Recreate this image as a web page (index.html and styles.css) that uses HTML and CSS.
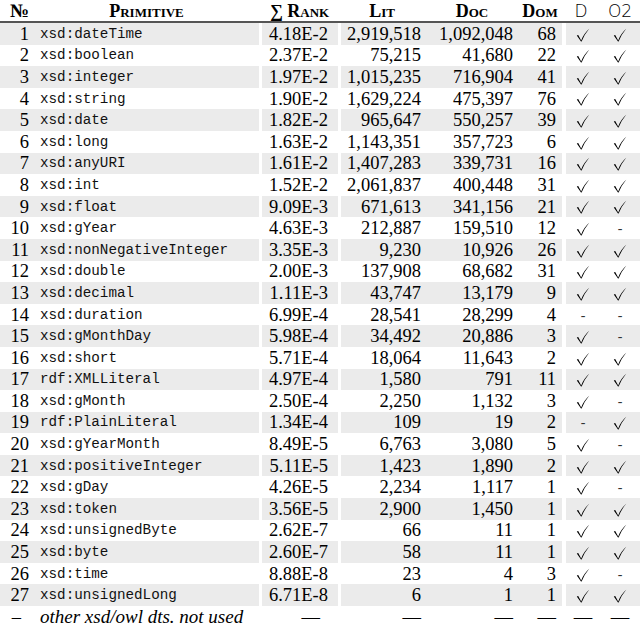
FILE: index.html
```
<!DOCTYPE html>
<html>
<head>
<meta charset="utf-8">
<link rel="stylesheet" href="styles.css">
</head>
<body>
<svg width="0" height="0" class="defs"><defs><symbol id="ck" viewBox="0 0 14 14"><path d="M0.8 7.6 L2.2 7 L5.2 12.4 Q7.5 6 13.2 0.8 Q8.6 6.2 5.6 13.4 L5 13.4 Z" fill="#000"/></symbol></defs></svg>
<table class="tbl">
<colgroup><col class="c1"><col class="c2"><col class="c3"><col class="c4"><col class="c5"><col class="c6"><col class="c7"><col class="c8"></colgroup>
<thead>
<tr>
<th class="num">№</th><th class="prim">Primitive</th><th class="rank">∑ Rank</th><th>Lit</th><th>Doc</th><th>Dom</th><th class="sym">D</th><th class="sym">O2</th>
</tr>
</thead>
<tbody id="body"></tbody>
<tfoot>
<tr class="foot">
<td class="num fnum">–</td><td class="prim"><i>other xsd/owl dts. not used</i></td><td class="rank sep"><span class="fdash">—</span></td><td class="lit sep">—</td><td class="doc">—</td><td class="dom">—</td><td class="mk sep">—</td><td class="mk">—</td>
</tr>
</tfoot>
</table>
<script src="app.js"></script>
</body>
</html>
```
FILE: app.js
```
var rows = [
["xsd:dateTime","4.18E-2","2,919,518","1,092,048","68",1,1],
["xsd:boolean","2.37E-2","75,215","41,680","22",1,1],
["xsd:integer","1.97E-2","1,015,235","716,904","41",1,1],
["xsd:string","1.90E-2","1,629,224","475,397","76",1,1],
["xsd:date","1.82E-2","965,647","550,257","39",1,1],
["xsd:long","1.63E-2","1,143,351","357,723","6",1,1],
["xsd:anyURI","1.61E-2","1,407,283","339,731","16",1,1],
["xsd:int","1.52E-2","2,061,837","400,448","31",1,1],
["xsd:float","9.09E-3","671,613","341,156","21",1,1],
["xsd:gYear","4.63E-3","212,887","159,510","12",1,0],
["xsd:nonNegativeInteger","3.35E-3","9,230","10,926","26",1,1],
["xsd:double","2.00E-3","137,908","68,682","31",1,1],
["xsd:decimal","1.11E-3","43,747","13,179","9",1,1],
["xsd:duration","6.99E-4","28,541","28,299","4",0,0],
["xsd:gMonthDay","5.98E-4","34,492","20,886","3",1,0],
["xsd:short","5.71E-4","18,064","11,643","2",1,1],
["rdf:XMLLiteral","4.97E-4","1,580","791","11",1,1],
["xsd:gMonth","2.50E-4","2,250","1,132","3",1,0],
["rdf:PlainLiteral","1.34E-4","109","19","2",0,1],
["xsd:gYearMonth","8.49E-5","6,763","3,080","5",1,0],
["xsd:positiveInteger","5.11E-5","1,423","1,890","2",1,1],
["xsd:gDay","4.26E-5","2,234","1,117","1",1,0],
["xsd:token","3.56E-5","2,900","1,450","1",1,1],
["xsd:unsignedByte","2.62E-7","66","11","1",1,1],
["xsd:byte","2.60E-7","58","11","1",1,1],
["xsd:time","8.88E-8","23","4","3",1,0],
["xsd:unsignedLong","6.71E-8","6","1","1",1,1]
];
function mark(v){
  return v ? '<svg class="ck" viewBox="0 0 14 14"><use href="#ck"/></svg>' : '<span class="no">-</span>';
}
var h = "";
rows.forEach(function(r, i){
  h += '<tr class="' + (i % 2 === 0 ? "odd" : "even") + '">' +
    '<td class="num">' + (i + 1) + '</td>' +
    '<td class="prim mono">' + r[0] + '</td>' +
    '<td class="rank sep">' + r[1] + '</td>' +
    '<td class="lit sep">' + r[2] + '</td>' +
    '<td class="doc">' + r[3] + '</td>' +
    '<td class="dom">' + r[4] + '</td>' +
    '<td class="mk sep">' + mark(r[5]) + '</td>' +
    '<td class="mk">' + mark(r[6]) + '</td></tr>';
});
document.getElementById("body").innerHTML = h;
```
FILE: styles.css
```
html, body {
  margin: 0;
  padding: 0;
  background: #fff;
}
body {
  width: 640px;
  height: 628px;
  overflow: hidden;
  font-family: "Liberation Serif", "DejaVu Serif", serif;
  color: #000;
}
.defs {
  position: absolute;
}
.tbl {
  width: 640px;
  table-layout: fixed;
  border-collapse: separate;
  border-spacing: 0;
  font-size: 18.5px;
}
.c1 { width: 34px; }
.c2 { width: 225px; }
.c3 { width: 79px; }
.c4 { width: 88px; }
.c5 { width: 92px; }
.c6 { width: 44px; }
.c7 { width: 38px; }
.c8 { width: 40px; }

th {
  height: 21px;
  padding: 0;
  font-weight: bold;
  font-variant: small-caps;
  font-size: 18px;
  line-height: 18px;
  text-align: center;
  border-bottom: 2px solid #555;
  white-space: nowrap;
}
th.num { text-align: right; padding-right: 5px; font-size: 19px; }
th.rank { text-align: left; padding-left: 11px; }
th.sym {
  font-family: "DejaVu Sans", sans-serif;
  font-weight: 200;
  font-variant: normal;
  font-size: 17px;
}

td {
  height: 21.6px;
  padding: 0;
  line-height: 18px;
  white-space: nowrap;
  overflow: visible;
}
tr.odd td { background: #ebebeb; }
td.sep { border-left: 3px solid #fff; }
td.mk.sep { border-left-width: 4px; }
td.num { text-align: right; padding-right: 5px; }
td.prim { padding-left: 6px; }
td.mono {
  font-family: "Liberation Mono", monospace;
  font-size: 14.25px;
  color: #111;
}
td.rank { text-align: right; padding-right: 10px; }
td.lit { text-align: right; padding-right: 5px; }
td.doc { text-align: right; padding-right: 5px; }
td.dom { text-align: right; padding-right: 6px; }
td.mk { text-align: center; line-height: 14px; }
.ck {
  display: inline-block;
  width: 14px;
  height: 14px;
  vertical-align: middle;
}
.no {
  font-size: 14px;
  color: #333;
}
.fdash { padding-right: 8px; }
.foot td { font-size: 18.5px; }
.foot td.fnum { padding-right: 13px; }
.foot td.prim i { font-size: 19px; }
```
